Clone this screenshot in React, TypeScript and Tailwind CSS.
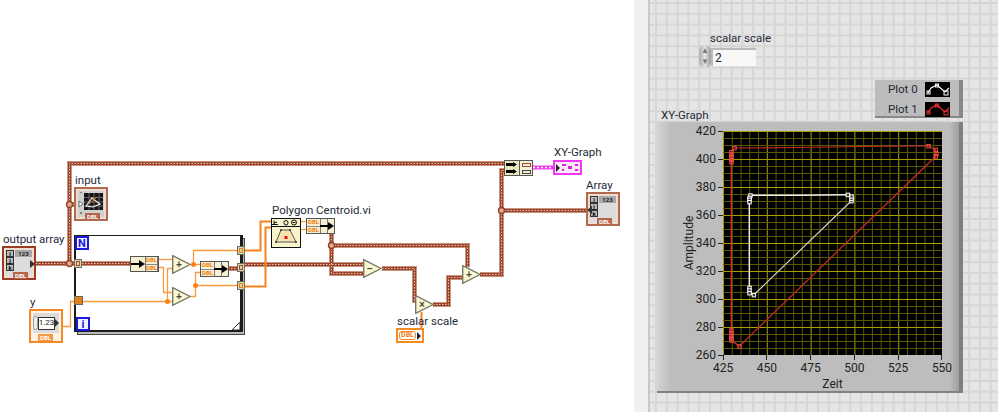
import React from "react";

const FONT = "font-['Roboto','Liberation_Sans',sans-serif]";

// wires of the block diagram, as "x,y x,y" runs
const arrayWires = [
  "33,263.5 75,263.5",
  "69.5,263.5 69.5,163.5 504,163.5",
  "69.5,204.5 77,204.5",
  "82,263.5 130,263.5",
  "228,268.5 237,268.5",
  "245,264.5 363,264.5",
  "331.5,233 331.5,273.5 363,273.5",
  "331.5,245.5 467.5,245.5 467.5,267",
  "382,268.5 414.5,268.5 414.5,300.5 417,300.5",
  "433,304.5 448.5,304.5 448.5,277.5 462,277.5",
  "480,274.5 501.5,274.5 501.5,170.5 504,170.5",
  "501.5,210.5 587,210.5",
];

const orangeWires = [
  "62,326.5 70.5,326.5 70.5,301.5 75,301.5",
  "82,301.5 172,301.5",
  "167.5,301.5 167.5,268.5 172,268.5",
  "159,259.5 172,259.5",
  "159,267.5 163.5,267.5 163.5,292.5 172,292.5",
  "191,264.5 200,264.5",
  "193.5,264.5 193.5,250.5 237,250.5",
  "191,296.5 195.5,296.5 195.5,272.5 200,272.5",
  "195.5,285.5 237,285.5",
  "300,221.5 306,221.5",
  "300,229.5 306,229.5",
];

const thickOrange = [
  "245,250.5 260.5,250.5 260.5,221.5 271,221.5",
  "245,286.5 265.5,286.5 265.5,227.5 271,227.5",
  "421.5,328 421.5,312",
];

const brownDots = [
  [69.5, 204.5],
  [69.5, 263.5],
  [331.5, 245.5],
  [501.5, 210.5],
];

const orangeDots = [
  [167.5, 301.5],
  [193.5, 264.5],
  [195.5, 285.5],
];

const line = (pts: number[][]) => pts.map((p) => p.join(",")).join(" ");

// plot points in px from the plot's top left corner
const whiteMarks = [
  [27.3, 64.3], [26.3, 66.7], [26.3, 68.7], [26.3, 71], [26.3, 156.7], [26.3, 159.3], [26.3, 162], [30.7, 164],
  [128.3, 70], [128.3, 67.7], [128.3, 65.3], [124.7, 63.7],
];
const redMarks = [
  [205.3, 15], [11.3, 17], [8.3, 21], [8.3, 23.3], [8.3, 26], [8.3, 28.7], [8.3, 31],
  [8.3, 199.3], [8.3, 202], [8.3, 204.7], [8.3, 207.3], [8.3, 209.3], [16.3, 215.3],
  [212.7, 25.3], [213.3, 22.7], [212.7, 18.7],
];

const yTicks = [420, 400, 380, 360, 340, 320, 300, 280, 260];
const xTicks = [425, 450, 475, 500, 525, 550];

function DblTag({ className }: { className: string }) {
  return (
    <div className={`flex h-[7px] w-[13px] items-center justify-center text-[6px] leading-none font-bold ${className}`}>
      DBL
    </div>
  );
}

function DblStack() {
  return (
    <div className="flex h-full w-[14px] flex-col border-r border-[#777] bg-[#f6efd2]">
      <DblTag className="flex-1 w-full border-b border-[#888] text-[#f07f10]" />
      <DblTag className="flex-1 w-full text-[#f07f10]" />
    </div>
  );
}

function BlackArrow() {
  return (
    <svg width="14" height="8" viewBox="0 0 14 8">
      <path d="M0 3h8V0l6 4-6 4V5H0z" fill="#000" />
    </svg>
  );
}

function Tunnel({ className, color }: { className: string; color: string }) {
  return (
    <div className={`absolute flex h-[9px] w-[8px] items-center justify-center border border-[#6e6e5e] bg-[#d8d4ae] ${className}`}>
      <div className={`h-[5px] w-[4px] border ${color}`} />
    </div>
  );
}

function Prim({ className, sign }: { className: string; sign: string }) {
  return (
    <svg className={`absolute h-[19px] w-[19px] ${className}`} viewBox="0 0 19 19">
      <polygon points="0.7,0.7 18,9.5 0.7,18.3" fill="#fbf8cf" stroke="#77776a" strokeWidth="1.4" />
      <text x="6.8" y="12.8" fontSize="10" fontWeight="700" textAnchor="middle" fill="#444" fontFamily="Liberation Sans">
        {sign}
      </text>
    </svg>
  );
}

function ArrayTerminal({ className, border, tag, arrowLeft }: { className: string; border: string; tag: string; arrowLeft?: boolean }) {
  return (
    <div className={`absolute h-[34px] w-[34px] border-2 bg-[#f0ddd2] p-[2px] ${border} ${className}`}>
      <div className="relative flex h-full w-full bg-[#dcdcdc]">
        <div className="flex w-[8px] flex-col">
          {["i", "j", "k"].map((c) => (
            <div key={c} className="flex h-[7px] items-center justify-center border border-[#333] bg-[#bbb] text-[6px] leading-none font-bold text-black">
              {c}
            </div>
          ))}
        </div>
        <div className="ml-[1px] flex h-[7px] w-[17px] items-center justify-center bg-[#a8a8a8] text-[6px] leading-none font-bold text-[#222]">
          123
        </div>
        <div className={`absolute top-[10px] h-0 w-0 border-y-[4px] border-y-transparent ${arrowLeft ? "left-[-3px] border-r-[5px] border-r-[#333]" : "right-[-3px] border-l-[5px] border-l-[#333]"}`} />
        <div className={`absolute bottom-[-3px] left-[7px] ${tag}`}>
          <DblTag className="w-[15px] text-white" />
        </div>
      </div>
    </div>
  );
}

function Label({ className, children }: { className: string; children: React.ReactNode }) {
  return <div className={`absolute text-[11.5px] leading-[14px] whitespace-nowrap text-[#1e2a38] ${className}`}>{children}</div>;
}

function BlockDiagram() {
  return (
    <div className="relative h-full w-[634px] bg-white">
      {/* while loop */}
      <div className="absolute left-[77px] top-[238px] h-[97px] w-[168px] border border-[#444] bg-[#bbb]" />
      <div className="absolute left-[74px] top-[235px] h-[97px] w-[169px] border-2 border-t border-r-[3px] border-[#1c1c1c] bg-white">
        <svg className="absolute right-0 bottom-0" width="8" height="8" viewBox="0 0 8 8">
          <path d="M0 8 8 0v8z" fill="#fff" stroke="#333" />
        </svg>
      </div>
      <div className="absolute left-[75px] top-[236px] flex h-[14px] w-[14px] items-center justify-center border-2 border-[#1818e0] bg-[#f2f2ff] text-[11px] leading-none font-bold text-[#1818e0]">
        N
      </div>
      <div className="absolute left-[76px] top-[317px] flex h-[14px] w-[14px] items-center justify-center border-2 border-[#1818e0] bg-[#f2f2ff] text-[11px] leading-none font-bold text-[#1818e0]">
        i
      </div>

      <svg className="absolute inset-0" width="634" height="412" viewBox="0 0 634 412" fill="none">
        {arrayWires.map((p) => (
          <polyline key={p} points={p} stroke="#c99480" strokeWidth="5" />
        ))}
        {arrayWires.map((p) => (
          <polyline key={p + "d"} points={p} stroke="#9c4429" strokeWidth="3" />
        ))}
        {arrayWires.map((p) => (
          <polyline key={p + "i"} points={p} stroke="#e6c0ac" strokeWidth="1" strokeDasharray="1.5 1.5" />
        ))}
        {orangeWires.map((p) => (
          <polyline key={p} points={p} stroke="#fb9a3c" strokeWidth="1.3" />
        ))}
        {thickOrange.map((p) => (
          <polyline key={p} points={p} stroke="#f8831a" strokeWidth="2" />
        ))}
        <polyline points="533,167.5 553,167.5" stroke="#f038f0" strokeWidth="4" />
        <polyline points="533,167.5 553,167.5" stroke="#fff" strokeWidth="1.5" strokeDasharray="2 2" />
        {brownDots.map(([x, y]) => (
          <circle key={x + "-" + y} cx={x} cy={y} r="3" fill="#dcae98" stroke="#99402a" strokeWidth="1.4" />
        ))}
        {orangeDots.map(([x, y]) => (
          <circle key={x + "-" + y} cx={x} cy={y} r="2.5" fill="#f8831a" />
        ))}
      </svg>

      {/* tunnels on the loop */}
      <Tunnel className="left-[74px] top-[259px]" color="border-[#a34f35]" />
      <div className="absolute left-[74px] top-[296px] h-[9px] w-[9px] border border-[#666] bg-[#e8801a]" />
      <Tunnel className="left-[237px] top-[246px]" color="border-[#f07f10]" />
      <Tunnel className="left-[237px] top-[263px]" color="border-[#a34f35]" />
      <Tunnel className="left-[237px] top-[281px]" color="border-[#f07f10]" />

      {/* terminals */}
      <Label className="left-[3px] top-[232px]">output array</Label>
      <ArrayTerminal className="left-[2px] top-[246px]" border="border-[#9c3c22]" tag="bg-[#b5654a]" />

      <Label className="left-[75px] top-[173px]">input</Label>
      <div className="absolute left-[74px] top-[187px] h-[34px] w-[34px] border-2 border-[#b06a50] bg-[#f0ddd2] p-[2px]">
        <svg width="26" height="26" viewBox="0 0 26 26">
          <rect width="26" height="26" fill="#cfcfcf" />
          <rect x="6" y="2" width="19" height="17" fill="#151515" />
          <path d="M6 6.5h19M6 11h19M6 15h19M11 2v17M16 2v17M21 2v17" stroke="#777" strokeWidth="0.8" />
          <path d="M8 15l6-8 8 6-7 3z" fill="none" stroke="#f2f2f2" strokeWidth="1.2" />
          <path d="M11 13l8-7" stroke="#e8801a" strokeWidth="1" />
          <path d="M1 10l4 3-4 3z" fill="#fff" stroke="#333" strokeWidth="0.7" />
          <path d="M3 1v1M2 22h2" stroke="#333" />
        </svg>
        <div className="absolute bottom-[-1px] left-[9px] bg-[#b5654a]">
          <DblTag className="w-[15px] text-white" />
        </div>
      </div>

      <Label className="left-[30px] top-[295px]">y</Label>
      <div className="absolute left-[29px] top-[309px] h-[34px] w-[34px] border-2 border-[#f68a22] bg-[#fff3e6] p-[2px]">
        <div className="flex h-[20px] items-center bg-[#dcdcdc]">
          <div className="h-[14px] w-[5px] shrink-0 rounded-full border border-[#999] bg-[#eee]" />
          <div className="flex h-[13px] w-[17px] shrink-0 items-center justify-center border border-[#333] bg-white text-[8px] leading-none text-[#222]">
            1.23
          </div>
          <div className="h-0 w-0 shrink-0 border-y-[4px] border-l-[4px] border-y-transparent border-l-[#333]" />
        </div>
        <div className="ml-[5px] mt-[1px] w-[15px] bg-[#f79a44]">
          <DblTag className="w-[15px] text-white" />
        </div>
      </div>

      {/* loop contents */}
      <div className="absolute left-[130px] top-[256px] flex h-[16px] w-[29px] border border-[#555] bg-[#f6efd2]">
        <div className="flex w-[15px] items-center justify-center border-r border-[#777]">
          <BlackArrow />
        </div>
        <DblStack />
      </div>
      <Prim className="left-[172px] top-[255px]" sign="+" />
      <Prim className="left-[172px] top-[287px]" sign="+" />
      <div className="absolute left-[200px] top-[261px] flex h-[16px] w-[29px] border border-[#555] bg-[#f6efd2]">
        <DblStack />
        <div className="relative flex-1">
          <div className="absolute left-[6px] top-0 h-full w-px bg-[#777]" />
          <div className="absolute left-[-1px] top-[3px]">
            <BlackArrow />
          </div>
        </div>
      </div>

      {/* centroid */}
      <Label className="left-[272px] top-[203px]">Polygon Centroid.vi</Label>
      <svg className="absolute left-[271px] top-[218px]" width="30" height="30" viewBox="0 0 30 30">
        <rect x="0.5" y="0.5" width="29" height="29" fill="#f8f4cc" stroke="#111" />
        <path d="M0 8.5h30" stroke="#111" />
        <path d="M3 6.5V2.5M3 5l3-1M1 6.5h6" stroke="#111" fill="none" />
        <rect x="13" y="2.5" width="4" height="4.5" rx="2" fill="none" stroke="#111" />
        <circle cx="23" cy="4.5" r="2.5" fill="none" stroke="#111" />
        <path d="M21.5 4.5h3" stroke="#111" />
        <path d="M5 24l5-12h9l6 12z" fill="#fbe3b0" stroke="#555" />
        <circle cx="5" cy="24" r="1" fill="#333" />
        <circle cx="10" cy="12" r="1" fill="#333" />
        <circle cx="19" cy="12" r="1" fill="#333" />
        <circle cx="25" cy="24" r="1" fill="#333" />
        <rect x="13.5" y="18" width="3" height="3" fill="#ee1111" />
      </svg>
      <div className="absolute left-[306px] top-[218px] flex h-[16px] w-[29px] border border-[#555] bg-[#f6efd2]">
        <DblStack />
        <div className="relative flex-1">
          <div className="absolute left-[6px] top-0 h-full w-px bg-[#777]" />
          <div className="absolute left-[-1px] top-[3px]">
            <BlackArrow />
          </div>
        </div>
      </div>

      <Prim className="left-[363px] top-[259px]" sign="−" />
      <Prim className="left-[415px] top-[295px]" sign="×" />
      <Prim className="left-[462px] top-[265px]" sign="+" />

      <Label className="left-[397px] top-[314px]">scalar scale</Label>
      <div className="absolute left-[396px] top-[328px] flex h-[15px] w-[28px] items-center border-2 border-[#f68a22] bg-white p-[1px]">
        <div className="flex h-[9px] w-[19px] items-center justify-center rounded-[3px] border border-[#f68a22] text-[7px] leading-none font-bold text-[#f07f10]">
          DBL
        </div>
        <div className="ml-[1px] h-0 w-0 border-y-[4px] border-l-[4px] border-y-transparent border-l-[#222]" />
      </div>

      {/* bundle + graph */}
      <div className="absolute left-[504px] top-[160px] flex h-[16px] w-[29px] border border-[#555] bg-[#e9e6bd]">
        <div className="flex w-[15px] flex-col items-center justify-around border-r border-[#555]">
          <svg width="12" height="5" viewBox="0 0 12 5">
            <path d="M0 1h7V0l4 2.5L7 5V4H0z" fill="#000" />
          </svg>
          <svg width="12" height="5" viewBox="0 0 12 5">
            <path d="M0 1h7V0l4 2.5L7 5V4H0z" fill="#000" />
          </svg>
        </div>
        <div className="flex flex-1 flex-col items-center justify-around bg-[#f2f0d8]">
          <div className="h-[4px] w-[9px] border border-[#a34f35]" />
          <div className="h-[4px] w-[9px] border border-[#444]" />
        </div>
      </div>

      <Label className="left-[554px] top-[145px]">XY-Graph</Label>
      <div className="absolute left-[553px] top-[160px] flex h-[15px] w-[29px] items-center border-2 border-[#f038f0] bg-[#fdeafd] pl-[1px]">
        <div className="h-0 w-0 border-y-[4px] border-l-[4px] border-y-transparent border-l-[#222]" />
        <svg className="ml-[1px]" width="18" height="9" viewBox="0 0 18 9">
          <path d="M1 1h4v2H1zM1 6h2v2H1zM7 3h4v3H7zM14 1h3v2h-3zM14 6h3v2h-3z" fill="#e020e0" />
        </svg>
      </div>

      <Label className="left-[586px] top-[178px]">Array</Label>
      <ArrayTerminal className="left-[586px] top-[192px]" border="border-[#b06a50]" tag="bg-[#b5654a]" arrowLeft />
    </div>
  );
}

function PlotSwatch({ color }: { color: string }) {
  return (
    <svg width="25" height="15" viewBox="0 0 25 15">
      <rect width="25" height="15" fill="#000" />
      <polyline points="3,11 6,6 12,3 20,10 24,6" fill="none" stroke={color} strokeWidth="1.2" />
      <rect x="2" y="9" width="3" height="3" fill="none" stroke={color} />
      <rect x="10.5" y="2" width="3" height="3" fill="none" stroke={color} />
      <rect x="19" y="9" width="4" height="4" fill="none" stroke={color} />
    </svg>
  );
}

function XYPlot() {
  const xs = Array.from({ length: 26 }, (_, i) => i * 8.76);
  const ys = Array.from({ length: 33 }, (_, i) => i * 7);
  return (
    <svg width="219" height="224" viewBox="0 0 219 224" className="block bg-black">
      {xs.map((x, i) => (
        <line key={i} x1={x + 0.5} x2={x + 0.5} y1="0" y2="224" stroke={i % 5 === 0 ? "#a8a000" : "#5c5800"} />
      ))}
      {ys.map((y, i) => (
        <line key={i} y1={y + 0.5} y2={y + 0.5} x1="0" x2="219" stroke={i % 4 === 0 ? "#a8a000" : "#5c5800"} />
      ))}
      <polyline points={line([[205.3, 15], [157.3, 15.3], [59, 16.7], [11.3, 17], [8.3, 21]])} fill="none" stroke="#c42c2c" strokeWidth="1.1" />
      <polyline points={line([[8.3, 21], [8.3, 209.3], [16.3, 215.3]])} fill="none" stroke="#d03030" strokeWidth="1.4" />
      <polyline points={line([[16.3, 215.3], [212.7, 25.3], [213.3, 22.7], [212.7, 18.7], [205.3, 15]])} fill="none" stroke="#c02828" strokeWidth="1.3" />
      {redMarks.map(([x, y], i) => (
        <rect key={i} x={x - 1.5} y={y - 1.5} width="3.4" height="3.4" fill="none" stroke="#f04a4a" />
      ))}
      <polyline points={line([[124.7, 63.7], [75.7, 64.3], [27.3, 64.3], [26.3, 71], [26.3, 162], [30.7, 164]])} fill="none" stroke="#eeeeee" strokeWidth="1.4" />
      <polyline points={line([[30.7, 164], [128.3, 70], [128.3, 65.3], [124.7, 63.7]])} fill="none" stroke="#d0d0d0" strokeWidth="1.2" />
      {whiteMarks.map(([x, y], i) => (
        <rect key={i} x={x - 1.5} y={y - 1.5} width="3.4" height="3.4" fill="#333" stroke="#fff" />
      ))}
    </svg>
  );
}

function FrontPanel() {
  return (
    <div className="h-full flex-1 border-l-2 border-[#c8c8c8] bg-[#e5e5e5] bg-[linear-gradient(#d6d6d6_2px,transparent_2px),linear-gradient(90deg,#d6d6d6_2px,transparent_2px)] bg-[size:10.8px_10.8px] bg-[position:5px_2px] pt-[31px] text-[#1e2a38]">
      <div className="ml-[60px] text-[11.5px] leading-[14px]">scalar scale</div>
      <div className="ml-[49px] flex h-[23px] items-center">
        <div className="flex h-[23px] w-[12px] flex-col items-center justify-around rounded-full bg-[linear-gradient(90deg,#aaa,#e4e4e4,#999)] text-[8px] leading-none text-[#777]">
          <span>▲</span>
          <span>▼</span>
        </div>
        <div className="flex h-[18px] w-[45px] items-center border-t-2 border-l-2 border-[#bbb] bg-[#f8f8f8] pl-[2px] text-[12px] leading-none">2</div>
      </div>

      <div className="mt-[12px] ml-[11px] flex h-[42px] w-[302px] justify-between">
        <div className="self-end text-[11.5px] leading-[14px]">XY-Graph</div>
        <div className="flex h-[38px] w-[88px] flex-col gap-[5px] border-r-4 border-b-2 border-[#888] bg-[#bcbcbc] pt-[2px] pl-[13px] text-[11.5px] leading-[15px]">
          <div className="flex items-center justify-between pr-[9px]">
            Plot 0
            <PlotSwatch color="#ffffff" />
          </div>
          <div className="flex items-center justify-between pr-[9px]">
            Plot 1
            <PlotSwatch color="#f03030" />
          </div>
        </div>
      </div>

      <div className="ml-[7px] flex h-[271px] w-[306px] border-r-4 border-b-2 border-[#808080] bg-[linear-gradient(90deg,#d4d4d4,#bdbdbd_14px,#bdbdbd_calc(100%-10px),#a0a0a0)] pt-[9px] text-[12px] leading-none text-[#222]">
        <div className="flex h-[224px] w-[40px] items-center justify-center pl-[24px]">
          <span className="-rotate-90 whitespace-nowrap">Amplitude</span>
        </div>
        <div className="flex h-[224px] w-[26px] flex-col justify-between">
          {yTicks.map((t) => (
            <div key={t} className="flex h-0 items-center justify-end gap-[2px]">
              {t}
              <div className="h-px w-[5px] shrink-0 bg-[#222]" />
            </div>
          ))}
        </div>
        <div className="w-[219px]">
          <XYPlot />
          <div className="flex w-[219px] justify-between">
            {xTicks.map((t) => (
              <div key={t} className="flex w-0 flex-col items-center">
                <div className="h-[5px] w-px bg-[#222]" />
                <span className="mt-[2px]">{t}</span>
              </div>
            ))}
          </div>
          <div className="mt-[4px] text-center">Zeit</div>
        </div>
      </div>
    </div>
  );
}

export default function App() {
  return (
    <div className={`flex h-[412px] w-[998px] overflow-hidden bg-white ${FONT}`}>
      <BlockDiagram />
      <div className="h-full w-[14px] bg-[#f0f0f0]" />
      <FrontPanel />
    </div>
  );
}
